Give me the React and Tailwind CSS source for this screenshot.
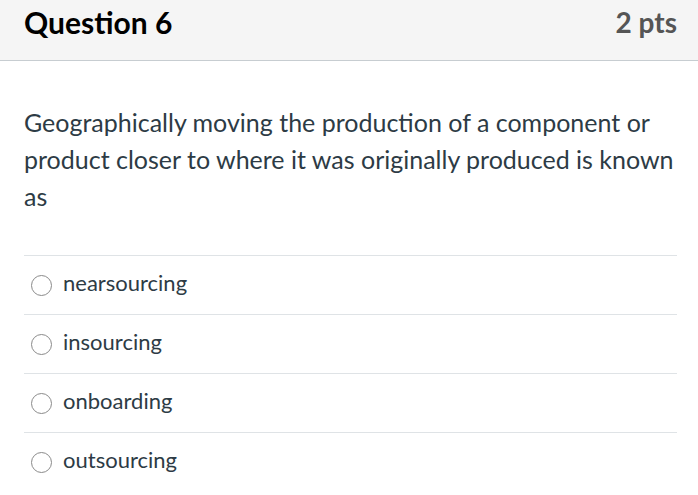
const options = ["nearsourcing", "insourcing", "onboarding", "outsourcing"];

export default function App() {
  return (
    <div className="w-[698px] h-[495px] bg-white overflow-hidden" style={{ fontFamily: "Lato, 'Open Sans', sans-serif" }}>
      <div className="h-[61px] bg-[#f5f5f5] border-b border-[#c7cdd1] flex justify-between items-start pl-[24px] pr-[21px] pt-[3px]">
        <h1 className="text-[30px] leading-[38px] font-bold text-black">Question 6</h1>
        <span className="text-[28px] leading-[38px] font-bold text-[#555]">2 pts</span>
      </div>
      <div className="px-[24px] pt-[43px]">
        <p className="text-[25px] leading-[37px] text-[#2d3b45]">
          Geographically moving the production of a component or product closer to where it was originally produced is known as
        </p>
        <div className="mt-[40px]">
          {options.map((o) => (
            <label key={o} className="flex items-center h-[59px] border-t border-[#dfe3e6] pl-[7px] mr-[-3px]">
              <span className="w-[21px] h-[21px] rounded-full border border-[#8a8a8a] bg-white shrink-0" />
              <span className="ml-[11px] text-[22px] text-[#2d3b45] pb-[5px]">{o}</span>
            </label>
          ))}
        </div>
      </div>
    </div>
  );
}
